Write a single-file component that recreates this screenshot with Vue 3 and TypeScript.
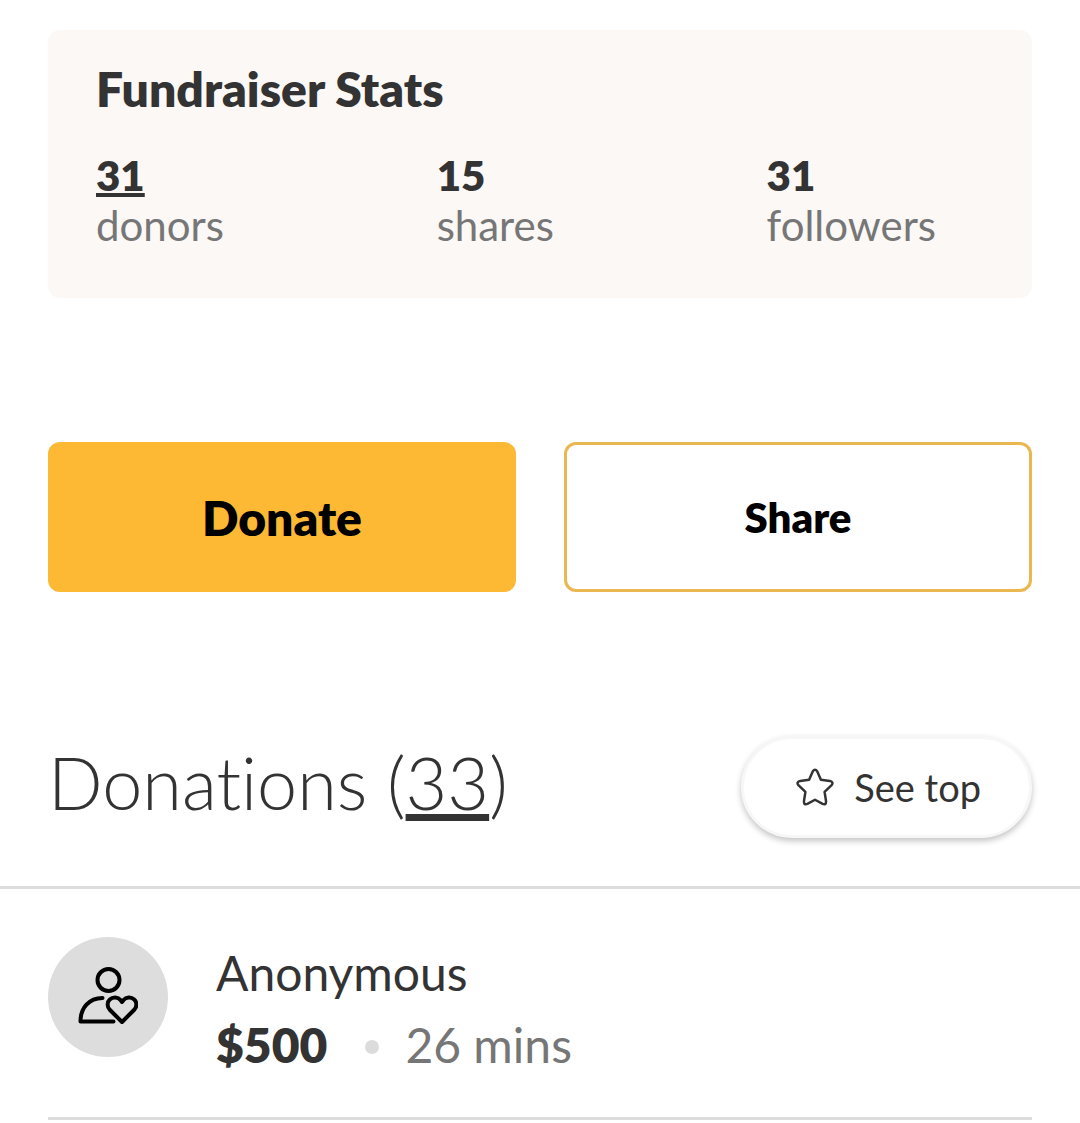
<script setup lang="ts">
interface Stat {
  value: number
  label: string
  linked: boolean
}

interface Donation {
  donor: string
  amount: string
  age: string
}

const stats: Stat[] = [
  { value: 31, label: 'donors', linked: true },
  { value: 15, label: 'shares', linked: false },
  { value: 31, label: 'followers', linked: false },
]

const donationCount = 33

const donations: Donation[] = [{ donor: 'Anonymous', amount: '$500', age: '26 mins' }]
</script>

<template>
  <main class="page">
    <section class="stats">
      <h2 class="stats-title">Fundraiser Stats</h2>
      <ul class="stats-list">
        <li v-for="stat in stats" :key="stat.label" class="stat">
          <a v-if="stat.linked" class="stat-value" href="#donations">{{ stat.value }}</a>
          <span v-else class="stat-value">{{ stat.value }}</span>
          <span class="stat-label">{{ stat.label }}</span>
        </li>
      </ul>
    </section>

    <div class="actions">
      <button type="button" class="action donate">Donate</button>
      <button type="button" class="action share">Share</button>
    </div>

    <section id="donations">
      <header class="donations-header">
        <h2 class="donations-title">Donations (<a class="count" href="#donations">{{ donationCount }}</a>)</h2>
        <button type="button" class="see-top">
          <svg class="star" viewBox="0 0 40 40" aria-hidden="true">
            <path
              d="M17.600 3.600Q20 0 22.400 3.600L26.200 12.300L35.600 13.600Q40.200 14.800 37.200 18.400L30.100 25.200L31.600 34.800Q31.800 39.400 28 37.800L20 33.400L12 37.800Q8.200 39.400 8.400 34.800L9.900 25.200L2.800 18.400Q-.2 14.800 4.400 13.600L13.800 12.300Z"
            />
          </svg>
          <span>See top</span>
        </button>
      </header>

      <ul class="donation-list">
        <li v-for="(donation, index) in donations" :key="index" class="donation">
          <span class="avatar">
            <svg class="avatar-icon" viewBox="0 0 60 60" aria-hidden="true">
              <circle cx="30.5" cy="13" r="11" />
              <path d="M24.5 31C11 31 2.500 41 2.500 54.500H35.500" />
              <path
                d="M44 55L32 43C28.700 39.600 29 35 31.800 32.500C35 29.500 40 30 42.500 33L44 35L45.500 33C48 30 53 29.500 56.200 32.500C59 35 59.300 39.600 56 43Z"
              />
            </svg>
          </span>
          <div class="details">
            <span class="donor">{{ donation.donor }}</span>
            <div class="meta">
              <strong class="amount">{{ donation.amount }}</strong>
              <span class="dot"></span>
              <span class="age">{{ donation.age }}</span>
            </div>
          </div>
        </li>
      </ul>
    </section>
  </main>
</template>

<style>
body {
  margin: 0;
  background: #fff;
}
</style>

<style scoped>
.page {
  padding-top: 30px;
  color: #333;
  font-family: Lato, "Liberation Sans", sans-serif;
  font-variant-ligatures: none;
}

h2,
ul {
  margin: 0;
  padding: 0;
}

ul {
  list-style: none;
}

a {
  color: inherit;
}

button {
  padding: 0;
  font-family: inherit;
  cursor: pointer;
}

.stats {
  margin: 0 48px;
  padding: 24px 48px 48px;
  border-radius: 12px;
  background: #fcf8f6;
}

.stats-title {
  font-size: 48px;
  font-weight: 800;
  line-height: 70px;
}

.stats-list {
  display: flex;
  justify-content: space-between;
  margin-top: 26px;
  padding-right: 48px;
}

.stat {
  display: flex;
  flex-direction: column;
  align-items: flex-start;
  font-size: 42px;
  line-height: 50px;
}

.stat-value {
  font-weight: 800;
  text-decoration-thickness: 4px;
}

.stat-label {
  color: #767676;
}

.actions {
  display: grid;
  grid-template-columns: 1fr 1fr;
  gap: 48px;
  margin: 144px 48px;
}

.action {
  height: 150px;
  border-radius: 12px;
  color: #000;
  font-weight: 800;
}

.donate {
  border: 0;
  background: #fdb933;
  font-size: 48px;
}

.share {
  border: 3px solid #ebb750;
  background: #fff;
  font-size: 42px;
}

.donations-header {
  display: flex;
  align-items: flex-start;
  justify-content: space-between;
  padding: 0 48px 48px;
  border-bottom: 3px solid #dcdcdc;
}

.donations-title {
  font-size: 72px;
  font-weight: 300;
  line-height: 92px;
}

.count {
  text-decoration-thickness: 7px;
}

.see-top {
  display: flex;
  align-items: center;
  justify-content: center;
  gap: 20px;
  height: 102px;
  padding: 0 48px 0 52px;
  border: 3px solid #f7f7f7;
  border-radius: 51px;
  background: #fff;
  box-shadow: 0 3px 6px rgba(0, 0, 0, 0.24);
  color: #333;
  font-size: 38px;
}

.star {
  width: 38px;
  height: 38px;
  fill: none;
  stroke: currentColor;
  stroke-width: 2.6;
  stroke-linejoin: round;
}

.donation-list {
  padding: 0 48px;
}

.donation {
  display: flex;
  gap: 48px;
  padding: 48px 0 36px;
  border-bottom: 3px solid #dcdcdc;
}

.avatar {
  display: flex;
  flex: none;
  align-items: center;
  justify-content: center;
  width: 120px;
  height: 120px;
  border-radius: 50%;
  background: #ddd;
}

.avatar-icon {
  width: 60px;
  height: 60px;
  fill: none;
  stroke: #000;
  stroke-width: 4;
  stroke-linecap: round;
  stroke-linejoin: round;
}

.details {
  font-size: 48px;
  line-height: 72px;
}

.meta {
  display: flex;
  align-items: center;
}

.amount {
  font-weight: 800;
}

.dot {
  width: 14px;
  height: 14px;
  margin: 4px 26px 0 38px;
  border-radius: 50%;
  background: #dcdcdc;
}

.age {
  color: #767676;
}
</style>
